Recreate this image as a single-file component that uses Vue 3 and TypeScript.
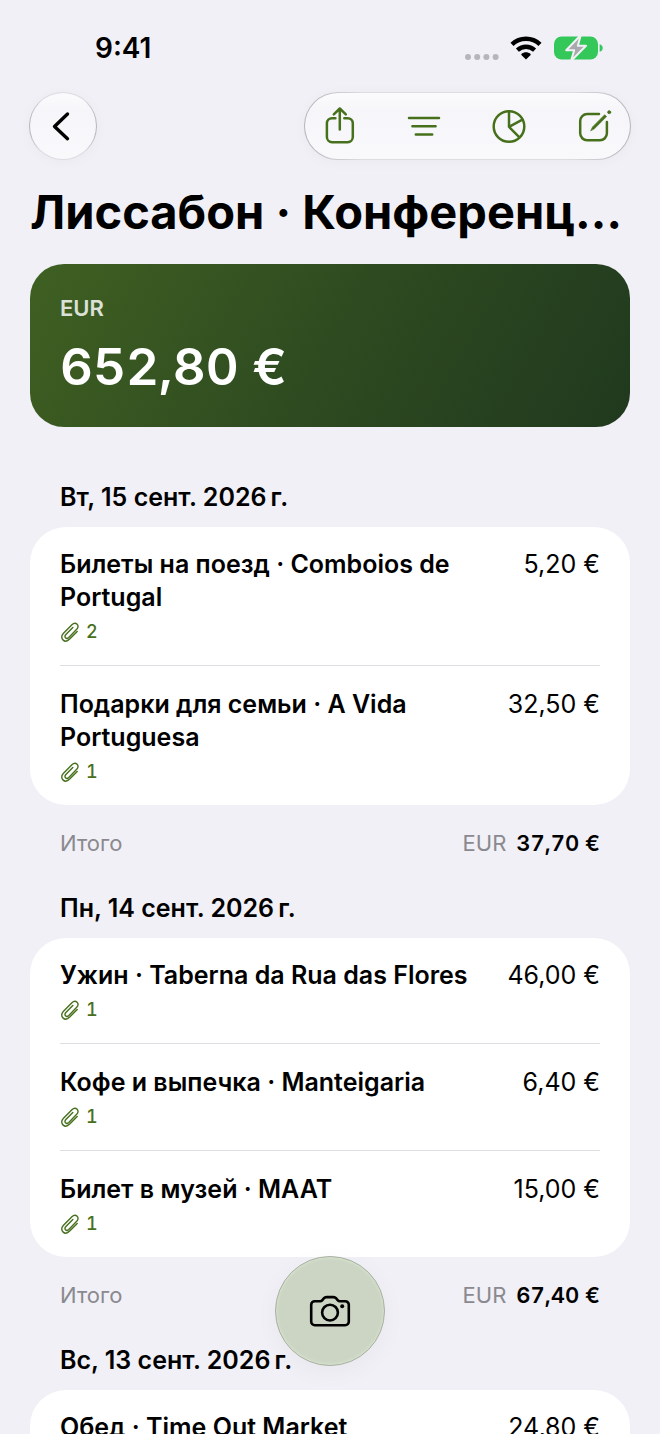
<script setup lang="ts">
interface Expense {
  title: string
  amount: string
  files: number
}

interface Day {
  date: string
  total: string
  items: Expense[]
}

const total = '652,80 €'

const days: Day[] = [
  {
    date: 'Вт, 15 сент. 2026\u202Fг.',
    total: '37,70 €',
    items: [
      { title: 'Билеты на поезд · Comboios de Portugal', amount: '5,20 €', files: 2 },
      { title: 'Подарки для семьи · A Vida Portuguesa', amount: '32,50 €', files: 1 },
    ],
  },
  {
    date: 'Пн, 14 сент. 2026\u202Fг.',
    total: '67,40 €',
    items: [
      { title: 'Ужин · Taberna da Rua das Flores', amount: '46,00 €', files: 1 },
      { title: 'Кофе и выпечка · Manteigaria', amount: '6,40 €', files: 1 },
      { title: 'Билет в музей · MAAT', amount: '15,00 €', files: 1 },
    ],
  },
  {
    date: 'Вс, 13 сент. 2026\u202Fг.',
    total: '24,80 €',
    items: [{ title: 'Обед · Time Out Market', amount: '24,80 €', files: 1 }],
  },
]
</script>

<template>
  <div class="screen">
    <div class="status">
      <span class="clock">9:41</span>
      <div class="indicators">
        <svg class="signal" viewBox="0 0 36 8" aria-hidden="true">
          <circle cx="4" cy="4" r="3" /><circle cx="13.2" cy="4" r="3" />
          <circle cx="22.4" cy="4" r="3" /><circle cx="31.6" cy="4" r="3" />
        </svg>
        <svg class="wifi" viewBox="0 0 32 24" aria-hidden="true">
          <path class="arc" d="M2 8.4C9.8 0.8 22.2 0.8 30 8.4" />
          <path class="arc" d="M7.4 14.2C12.4 9.6 19.6 9.6 24.6 14.2" />
          <path d="M16 23.6l-4.4-4.4c-.5-.6-.4-1.1.1-1.5 2.5-2 6.1-2 8.6 0 .5.4.6.9.1 1.5z" />
        </svg>
        <svg class="battery" viewBox="0 0 50 28" aria-hidden="true">
          <rect class="cell" x="0" y="2.5" width="44" height="23" rx="7.5" />
          <path class="cell" d="M45.6 10.2c4.2 1 4.2 6.6 0 7.6z" />
          <path class="bolt" d="M26.8 1L12.2 16.2h8L17 27 32 11.8h-8.2z" />
        </svg>
      </div>
    </div>

    <header class="toolbar">
      <button class="glass back" type="button" aria-label="Назад">
        <svg viewBox="0 0 40 44" aria-hidden="true"><path d="M24.5 10L11.5 22.4l13 12.3" /></svg>
      </button>
      <div class="glass actions">
        <button type="button" aria-label="Поделиться">
          <svg viewBox="0 0 40 44" aria-hidden="true">
            <path d="M15.4 14.2H12a5.1 5.1 0 0 0-5.1 5.1v13.8a5.1 5.1 0 0 0 5.1 5.1h15.7a5.1 5.1 0 0 0 5.1-5.1V19.3a5.1 5.1 0 0 0-5.1-5.1h-3.4" />
            <path d="M19.8 25.6V4.6M13.8 10.3l6-5.8 6 5.8" />
          </svg>
        </button>
        <button type="button" aria-label="Сортировка">
          <svg viewBox="0 0 40 44" aria-hidden="true">
            <path d="M4 14h30M7.4 22.3h23.2M10.8 30.6h16.4" />
          </svg>
        </button>
        <button type="button" aria-label="Статистика">
          <svg viewBox="0 0 40 44" aria-hidden="true">
            <circle cx="20" cy="22.5" r="15.3" />
            <path d="M20 7.2v15.6l13.4-7.2M20 22.8l10.2 10.4" />
          </svg>
        </button>
        <button type="button" aria-label="Изменить">
          <svg viewBox="0 0 40 44" aria-hidden="true">
            <path d="M25 10H13.2a7 7 0 0 0-7 7v12.3a7 7 0 0 0 7 7h12.7a7 7 0 0 0 7-7V18" />
            <path class="pencil" d="M16.8 26.6l1.7-3.7L30.7 10.7l1.9 1.9L20.4 24.8z" />
            <circle class="pencil" cx="35.2" cy="8.2" r="1.6" />
          </svg>
        </button>
      </div>
    </header>

    <main>
      <h1>Лиссабон · Конференц…</h1>

      <section class="hero">
        <span class="currency">EUR</span>
        <strong>{{ total }}</strong>
      </section>

      <section v-for="day in days" :key="day.date" class="day">
        <h2>{{ day.date }}</h2>
        <ul class="card">
          <li v-for="item in day.items" :key="item.title">
            <div class="info">
              <h3>{{ item.title }}</h3>
              <div class="files">
                <svg viewBox="0 0 20 22" aria-hidden="true">
                  <path d="M17.2 10.4l-7.5 7.7c-5 4.9-11-.9-6.2-5.8l8.4-8.6c3.8-3.7 8.5.8 4.8 4.6l-7.9 8.1c-2.5 2.4-5.3-.4-2.9-2.8l6.9-7.1" />
                </svg>
                <span>{{ item.files }}</span>
              </div>
            </div>
            <span class="amount">{{ item.amount }}</span>
          </li>
        </ul>
        <div class="sum">
          <span>Итого</span>
          <span class="sum-value">EUR <b>{{ day.total }}</b></span>
        </div>
      </section>
    </main>

    <button class="camera" type="button" aria-label="Сканировать чек">
      <svg viewBox="0 0 44 34" aria-hidden="true">
        <path d="M6.8 7.2h5.3c1 0 1.7-.4 2.3-1.1l1.6-1.9c.7-.8 1.4-1.1 2.4-1.1h7.2c1 0 1.7.3 2.4 1.1l1.6 1.9c.6.7 1.3 1.1 2.3 1.1h5.3a3.6 3.6 0 0 1 3.6 3.6v16.8a3.6 3.6 0 0 1-3.6 3.6H6.8a3.6 3.6 0 0 1-3.6-3.6V10.8a3.6 3.6 0 0 1 3.6-3.6z" />
        <circle cx="22" cy="18.6" r="7.9" />
        <circle class="dot" cx="34.2" cy="12.2" r="2" />
      </svg>
    </button>
  </div>
</template>

<style>
body {
  margin: 0;
  background: #f1f0f6;
}
</style>

<style scoped>
.screen {
  position: relative;
  height: 100vh;
  overflow: hidden;
  box-sizing: border-box;
  padding: 0 30px;
  background: #f1f0f6;
  color: #000;
  font-family: Inter, "Noto Sans", sans-serif;
  font-size: 25px;
  line-height: 33px;
}

h1,
h2,
h3,
ul {
  margin: 0;
  padding: 0;
}

button {
  padding: 0;
  border: 0;
  background: none;
  cursor: pointer;
}

svg {
  display: block;
  flex: none;
}

.status {
  display: flex;
  align-items: center;
  justify-content: space-between;
  height: 92px;
  padding: 4px 26px 0 65px;
  box-sizing: border-box;
}

.clock {
  font-size: 28px;
  font-weight: 600;
}

.indicators {
  display: flex;
  align-items: center;
  gap: 10px;
}

.signal {
  width: 36px;
  height: 8px;
  margin-top: 18px;
  fill: #b6b5bb;
}

.wifi {
  width: 32px;
  height: 24px;
  margin-right: 2px;
}

.arc {
  fill: none;
  stroke: #000;
  stroke-width: 4.4;
}

.battery {
  width: 50px;
  height: 28px;
}

.cell {
  fill: #34c759;
}

.bolt {
  fill: #a9a9ad;
  stroke: #f1f0f6;
  stroke-width: 2;
  stroke-linejoin: round;
}

.toolbar {
  display: flex;
  justify-content: space-between;
  margin: 0 -1px;
}

.glass {
  box-sizing: border-box;
  height: 68px;
  border: 1px solid transparent;
  border-radius: 34px;
  background:
    linear-gradient(#fbfbfd, #f6f6fa 30%, #f9f9fc 100%) padding-box,
    linear-gradient(90deg, #b4b4b9, #dcdce1 18%, #dcdce1 82%, #b4b4b9) border-box;
  box-shadow: 0 2px 14px rgba(0, 0, 0, 0.03);
}

.glass svg {
  width: 40px;
  height: 44px;
  fill: none;
  stroke: #47701c;
  stroke-width: 2.5;
  stroke-linecap: round;
  stroke-linejoin: round;
}

.back {
  display: grid;
  place-items: center;
  width: 68px;
}

.glass.back svg {
  stroke: #000;
  stroke-width: 3.4;
}

.actions {
  display: flex;
  align-items: center;
  justify-content: space-between;
  flex: 0 1 327px;
  padding: 0 16px 0 15px;
}

.glass .pencil {
  fill: #47701c;
  stroke-width: 0.6;
}

h1 {
  padding-top: 20px;
  font-size: 47px;
  font-weight: 700;
  line-height: 64px;
  white-space: nowrap;
}

.hero {
  display: flex;
  flex-direction: column;
  gap: 10px;
  box-sizing: border-box;
  height: 163px;
  margin-top: 20px;
  padding: 28px 30px;
  border-radius: 34px;
  background: linear-gradient(120deg, #3f6022, #2d4a20 52%, #20391e);
  color: #fff;
}

.currency {
  font-size: 22px;
  font-weight: 600;
  line-height: 32px;
  opacity: 0.82;
}

.hero strong {
  font-size: 51px;
  font-variant-numeric: tabular-nums;
  font-weight: 600;
  line-height: 66px;
}

.day {
  padding-top: 32px;
}

.hero + .day {
  padding-top: 54px;
}

h2 {
  margin: 0 30px 13px;
  font-size: 25px;
  font-weight: 600;
}

.card {
  padding: 0 30px;
  border-radius: 36px;
  background: #fff;
  list-style: none;
}

li {
  display: flex;
  justify-content: space-between;
  gap: 24px;
  padding: 21px 0 20px;
}

li + li {
  padding-top: 22px;
  border-top: 1px solid #dedee2;
}

h3 {
  font-size: 25px;
  font-weight: 600;
}

.files {
  display: flex;
  align-items: center;
  gap: 6px;
  margin-top: 5px;
  color: #47701c;
  font-size: 18px;
  font-variant-numeric: tabular-nums;
  font-weight: 500;
  line-height: 26px;
}

.files svg {
  width: 20px;
  height: 22px;
  fill: none;
  stroke: currentColor;
  stroke-width: 1.4;
  stroke-linecap: round;
}

.amount {
  white-space: nowrap;
}

.sum {
  display: flex;
  justify-content: space-between;
  padding: 21px 30px 0;
  color: #8a898f;
  font-size: 22px;
  line-height: 34px;
}

.sum-value {
  display: flex;
  gap: 10px;
}

.sum b {
  color: #000;
  font-variant-numeric: tabular-nums;
  font-weight: 600;
}

.camera {
  position: absolute;
  bottom: 68px;
  left: calc(50% - 55px);
  display: grid;
  place-items: center;
  width: 110px;
  height: 110px;
  border: 1px solid #a9b0a4;
  border-radius: 50%;
  background: #ccd5c4;
  box-shadow:
    inset 0 1px 3px #d9e5cd,
    inset 0 -1px 3px #d9e5cd,
    0 6px 24px rgba(0, 0, 0, 0.04);
}

.camera svg {
  width: 44px;
  height: 34px;
  fill: none;
  stroke: #000;
  stroke-width: 2.6;
}

.camera .dot {
  fill: #000;
  stroke: none;
}
</style>
